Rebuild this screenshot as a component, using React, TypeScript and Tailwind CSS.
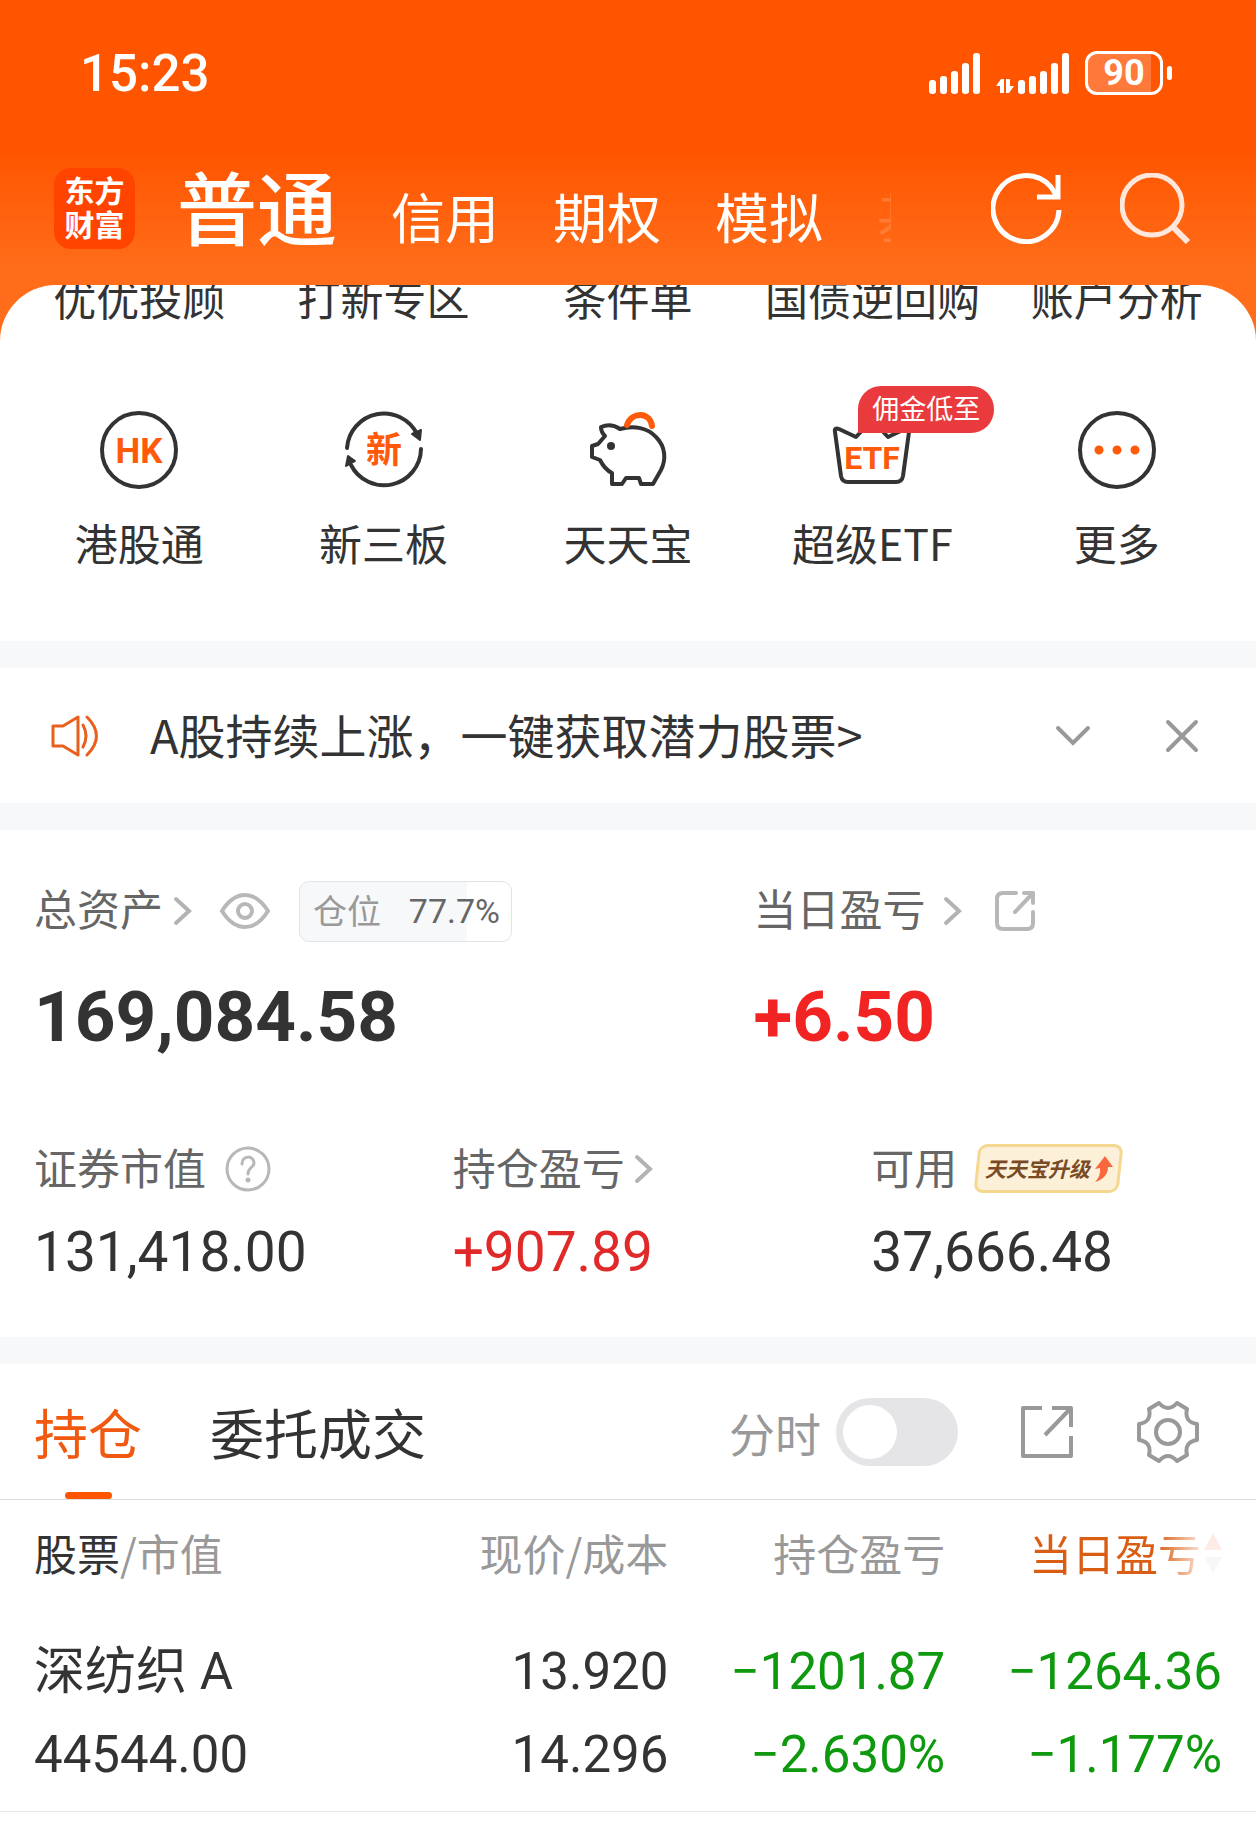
import type { ReactNode } from "react";

const shortcutLabels = ["优优投顾", "打新专区", "条件单", "国债逆回购", "账户分析"];

const holdings = [
  {
    name: "深纺织 A",
    marketValue: "44544.00",
    price: "13.920",
    cost: "14.296",
    profit: "−1201.87",
    profitRate: "−2.630%",
    dayProfit: "−1264.36",
    dayRate: "−1.177%",
  },
];

function SignalBars() {
  return (
    <svg className="h-[41px] w-[51px]" viewBox="0 0 51 41" fill="currentColor" aria-hidden="true">
      <rect x="0" y="27" width="7" height="14" rx="3" />
      <rect x="11" y="23" width="7" height="18" rx="3" />
      <rect x="22" y="18" width="7" height="23" rx="3" />
      <rect x="33" y="10" width="7" height="31" rx="3" />
      <rect x="44" y="0" width="7" height="41" rx="3" />
    </svg>
  );
}

function StatusBar() {
  return (
    <div className="flex h-[50px] items-center justify-between pr-[84px] pl-20 font-['Roboto',sans-serif]">
      <span className="pt-[2px] text-[51px] leading-[50px] font-medium">15:23</span>
      <div className="flex items-center">
        <SignalBars />
        <svg className="mt-[26px] ml-4 h-[14px] w-[18px]" viewBox="0 0 18 14" fill="currentColor" aria-hidden="true">
          <path d="M8 0v14H4V7H0L5 0zM10 0h4v7h4l-5 7h-3z" />
        </svg>
        <span className="ml-1 flex">
          <SignalBars />
        </span>
        <span className="ml-4 flex h-11 w-[78px] items-center justify-center rounded-xl border-[3px] border-white bg-[linear-gradient(to_right,#ff7a3a_88%,transparent_88%)] text-[36px] leading-none font-bold">
          90
        </span>
        <span className="ml-1 h-[14px] w-[5px] rounded-full bg-white" />
      </div>
    </div>
  );
}

function TopNav() {
  return (
    <div className="mt-[52px] flex h-[116px] items-center pr-[65px] pl-[54px]">
      <div className="flex h-[81px] w-[81px] items-center justify-center rounded-[17px] bg-[#ff4400] pb-1">
        <span className="w-[60px] text-[30px] leading-[34px] font-bold">东方财富</span>
      </div>
      <nav className="ml-[42px] flex w-[714px] items-baseline gap-[54px] overflow-hidden pt-1 text-[54px] leading-[108px] whitespace-nowrap">
        <a href="#normal" className="text-[80px] font-medium">普通</a>
        <a href="#credit">信用</a>
        <a href="#options">期权</a>
        <a href="#demo">模拟</a>
        <a href="#fund" className="opacity-15">基金</a>
      </nav>
      <div className="ml-auto flex gap-[58px]">
        <button type="button" aria-label="刷新">
          <svg className="h-[71px] w-[71px]" viewBox="0 0 71 71" fill="none" stroke="currentColor" strokeWidth="5">
            <path d="M68 37A33 33 0 1 1 60 14L67 25" />
            <path d="M67 2V24H46" />
          </svg>
        </button>
        <button type="button" aria-label="搜索" className="opacity-85">
          <svg className="h-[71px] w-[71px]" viewBox="0 0 71 71" fill="none" stroke="currentColor" strokeWidth="5">
            <circle cx="32" cy="32" r="30" />
            <path d="M53 54L68 69" strokeWidth="6" />
          </svg>
        </button>
      </div>
    </div>
  );
}

function IconFrame({ children }: { children: ReactNode }) {
  return (
    <svg
      className="h-20 w-20"
      viewBox="0 0 80 80"
      fill="none"
      stroke="#333333"
      strokeWidth="4"
      strokeLinejoin="round"
      strokeLinecap="round"
      aria-hidden="true"
    >
      {children}
    </svg>
  );
}

const services = [
  {
    label: "港股通",
    icon: (
      <IconFrame>
        <circle cx="40" cy="40" r="37" />
        <text x="40" y="53" textAnchor="middle" stroke="none" className="fill-[#ff5a0a] font-['Roboto',sans-serif] text-[35px] font-bold">HK</text>
      </IconFrame>
    ),
  },
  {
    label: "新三板",
    icon: (
      <IconFrame>
        <path d="M3 38A37 37 0 0 1 73 24M77 39A37 37 0 0 1 7 55" />
        <path d="M68 24L77 20L76 30ZM4 46L2 56L11 51Z" fill="#333333" strokeWidth="2" />
        <text x="40" y="53" textAnchor="middle" stroke="none" className="fill-[#ff5a0a] text-[36px] font-bold">新</text>
      </IconFrame>
    ),
  },
  {
    label: "天天宝",
    icon: (
      <IconFrame>
        <path d="M13 17C20 14 26 15 32 19C46 15 60 18 68 27C78 37 78 50 73 60L65 74H53L51 68H38L34 74H24V63C18 60 15 56 12 50L4 47V36L10 34L17 26C14 23 13 20 13 17Z" />
        <circle cx="23" cy="36" r="4" fill="#333333" stroke="none" />
        <path d="M39 15C44 1 62 2 64 16" stroke="#ff5a0a" strokeWidth="6" />
      </IconFrame>
    ),
  },
  {
    label: "超级ETF",
    badge: "佣金低至",
    icon: (
      <IconFrame>
        <path d="M7 19L24 27L40 10L56 27L73 19Q78 17 77 22L71 66Q70 72 64 72H16Q10 72 9 66L3 22Q2 17 7 19Z" />
        <text x="40" y="59" textAnchor="middle" stroke="none" className="fill-[#ff5a0a] font-['Roboto',sans-serif] text-[32px] font-bold">ETF</text>
      </IconFrame>
    ),
  },
  {
    label: "更多",
    icon: (
      <IconFrame>
        <circle cx="40" cy="40" r="37" />
        <path d="M22 40h0M40 40h0M58 40h0" stroke="#ff5a0a" strokeWidth="9" />
      </IconFrame>
    ),
  },
];

function Shortcuts() {
  return (
    <section className="overflow-hidden rounded-t-[56px] bg-white px-[17px] pb-[69px] text-[43px] leading-[60px] whitespace-nowrap">
      <div className="-mt-[18px] grid grid-cols-5 text-center">
        {shortcutLabels.map((label) => (
          <a key={label} href="#shortcut">{label}</a>
        ))}
      </div>
      <div className="mt-[83px] grid grid-cols-5">
        {services.map((item) => (
          <a key={item.label} href="#service" className="relative flex flex-col items-center gap-[22px]">
            {item.icon}
            <span>{item.label}</span>
            {item.badge && (
              <span className="absolute -top-6 left-[108px] flex h-[47px] w-[136px] items-center justify-center rounded-[23px] rounded-bl-none bg-[#e93b3d] pb-1 text-[27px] leading-none text-white">
                {item.badge}
              </span>
            )}
          </a>
        ))}
      </div>
    </section>
  );
}

function Notice() {
  return (
    <section className="flex h-[135px] items-center pr-14 pl-[51px]">
      <svg className="h-[42px] w-12" viewBox="0 0 48 42" fill="none" stroke="#e8611c" strokeWidth="3" strokeLinejoin="round" aria-hidden="true">
        <path d="M2 11H12L27 2V40L12 31H2Z" />
        <path d="M32 10Q38 21 32 32M36 2Q55 21 36 40" strokeLinecap="round" />
      </svg>
      <a href="#notice" className="ml-[51px] pb-1 text-[47px] leading-[60px] whitespace-nowrap">A股持续上涨，一键获取潜力股票&gt;</a>
      <div className="ml-auto flex items-center gap-[73px] text-[#999999]">
        <button type="button" aria-label="展开">
          <svg className="h-9 w-9" viewBox="0 0 36 36" fill="none" stroke="currentColor" strokeWidth="4" strokeLinecap="round">
            <path d="M3 10L18 25L33 10" />
          </svg>
        </button>
        <button type="button" aria-label="关闭">
          <svg className="h-9 w-9" viewBox="0 0 36 36" fill="none" stroke="currentColor" strokeWidth="4" strokeLinecap="round">
            <path d="M4 4L32 32M32 4L4 32" />
          </svg>
        </button>
      </div>
    </section>
  );
}

function Chevron() {
  return (
    <svg className="h-[30px] w-5" viewBox="0 0 20 30" fill="none" stroke="#b3b3b3" strokeWidth="4" strokeLinecap="round" aria-hidden="true">
      <path d="M3 3L16 15L3 27" />
    </svg>
  );
}

function Assets() {
  return (
    <section className="pt-[46px] pb-[54px] text-[43px] leading-[61px] whitespace-nowrap text-[#666666]">
      <div className="grid grid-cols-[3fr_2fr]">
        <div className="pl-[34px]">
          <div className="flex h-[70px] items-center">
            <span className="pb-2">总资产</span>
            <span className="ml-[10px] flex"><Chevron /></span>
            <button type="button" aria-label="隐藏金额" className="ml-[26px]">
              <svg className="h-9 w-[52px]" viewBox="0 0 52 36" fill="none" stroke="#b8b8b8" strokeWidth="4">
                <path d="M3 18Q13 2 26 2T49 18Q39 34 26 34T3 18Z" />
                <circle cx="26" cy="18" r="7" />
              </svg>
            </button>
            <div className="ml-7 flex h-[61px] w-[213px] items-center justify-between rounded-[10px] border border-[#e2e3e5] bg-[linear-gradient(to_right,#f7f8fa_79%,transparent_79%)] pr-[11px] pl-[13px] text-[34px]">
              <span className="pb-1 text-[#999999]">仓位</span>
              <span className="font-['Roboto',sans-serif]">77.7%</span>
            </div>
          </div>
          <p className="mt-[26px] font-['Roboto',sans-serif] text-[71px] leading-[90px] font-bold text-[#333333]">169,084.58</p>
        </div>
        <div>
          <div className="flex h-[70px] items-center">
            <span className="pb-2">当日盈亏</span>
            <span className="ml-[17px] flex"><Chevron /></span>
            <button type="button" aria-label="分享当日盈亏" className="ml-8">
              <svg className="h-10 w-10" viewBox="0 0 40 40" fill="none" stroke="#b8b8b8" strokeWidth="4" strokeLinecap="round" strokeLinejoin="round">
                <path d="M21 2H8Q2 2 2 8V32Q2 38 8 38H32Q38 38 38 32V21M29 2H38V12M38 2L20 21" />
              </svg>
            </button>
          </div>
          <p className="mt-[26px] font-['Roboto',sans-serif] text-[71px] leading-[90px] font-bold text-[#f12323]">+6.50</p>
        </div>
      </div>

      <div className="mt-[76px] grid grid-cols-3">
        <div className="pl-[34px]">
          <div className="flex h-[61px] items-center">
            <span className="pb-1">证券市值</span>
            <button type="button" aria-label="说明" className="ml-[19px]">
              <svg className="h-[46px] w-[46px]" viewBox="0 0 46 46" fill="none" stroke="#b8b8b8" strokeWidth="3" strokeLinecap="round">
                <circle cx="23" cy="23" r="21" />
                <path d="M17 18C17 9 29 9 29 17C29 22 23 21 23 28" />
                <path d="M23 34h0" strokeWidth="5" />
              </svg>
            </button>
          </div>
          <p className="mt-[23px] font-['Roboto',sans-serif] text-[55px] text-[#333333]">131,418.00</p>
        </div>
        <div className="pl-[34px]">
          <div className="flex h-[61px] items-center">
            <span className="pb-1">持仓盈亏</span>
            <span className="ml-[9px] flex"><Chevron /></span>
          </div>
          <p className="mt-[23px] font-['Roboto',sans-serif] text-[55px] text-[#e02a2a]">+907.89</p>
        </div>
        <div className="pl-[34px]">
          <div className="flex h-[61px] items-center">
            <span className="pb-1">可用</span>
            <a href="#upgrade" className="relative ml-[17px] flex h-[49px] w-[149px] items-center justify-center gap-1 text-[21px] leading-none font-bold text-[#7a4a24] italic">
              <span className="absolute inset-0 mx-[2px] -skew-x-6 rounded-[9px] border-[3px] border-[#f5d78f] bg-[#fdf0d8]" />
              <span className="relative">天天宝升级</span>
              <svg className="relative h-[26px] w-[19px]" viewBox="0 0 19 26" fill="#f9673c" aria-hidden="true">
                <path d="M11 0L19 11L14 11Q14 22 1 26Q7 20 6 12L1 13Z" />
              </svg>
            </a>
          </div>
          <p className="mt-[23px] font-['Roboto',sans-serif] text-[55px] text-[#333333]">37,666.48</p>
        </div>
      </div>
    </section>
  );
}

function HoldingsTabs() {
  return (
    <div className="flex h-[136px] items-center border-b border-[#dddddd] pr-[57px] pl-[34px] text-[54px] leading-[134px] whitespace-nowrap">
      <button type="button" className="relative text-[#f0590f]">
        持仓
        <span className="absolute bottom-0 left-[31px] h-[7px] w-[47px] rounded-full bg-[#ff5500]" />
      </button>
      <button type="button" className="ml-[68px]">委托成交</button>
      <label htmlFor="timeline" className="ml-auto text-[46px] text-[#999999]">分时</label>
      <input
        id="timeline"
        type="checkbox"
        className="ml-[15px] flex h-[68px] w-[122px] shrink-0 appearance-none items-center rounded-full bg-[#e5e5e7] pl-[7px] before:h-[54px] before:w-[54px] before:rounded-full before:bg-white"
      />
      <button type="button" aria-label="分享持仓" className="ml-[62px]">
        <svg className="h-[54px] w-[54px]" viewBox="0 0 54 54" fill="none" stroke="#999999" strokeWidth="4" strokeLinejoin="round">
          <path d="M22 3H3V51H51V31M32 3H51V22M51 3L25 30" />
        </svg>
      </button>
      <button type="button" aria-label="设置" className="ml-[63px]">
        <svg className="h-[62px] w-[62px]" viewBox="0 0 62 62" fill="none" stroke="#999999" strokeWidth="4" strokeLinejoin="round">
          <path d="M22 2Q31 12 40 2L50 8Q47 21 60 23V39Q47 41 50 54L40 60Q31 50 22 60L12 54Q15 41 2 39V23Q15 21 12 8Z" />
          <circle cx="31" cy="31" r="12" />
        </svg>
      </button>
    </div>
  );
}

function HoldingsTable() {
  return (
    <div className="border-b border-[#e8e8e8] pr-[34px] pl-[34px]">
      <table className="w-full table-fixed text-right whitespace-nowrap">
        <thead className="text-[43px] leading-[105px] text-[#999999]">
          <tr>
            <th className="w-[30%] text-left font-normal">
              <span className="text-[#333333]">股票</span>/市值
            </th>
            <th className="w-[23.4%] font-normal">现价/成本</th>
            <th className="w-[23.3%] font-normal">持仓盈亏</th>
            <th className="w-[23.3%] font-normal">
              <span className="flex items-center justify-end">
                <span className="bg-[linear-gradient(to_right,#d95d12_74%,#fbe3d8_100%)] bg-clip-text text-transparent">当日盈亏</span>
                <svg className="ml-[3px] h-10 w-[18px]" viewBox="0 0 18 40" aria-hidden="true">
                  <path d="M9 0L18 17H0Z" fill="#fdece5" />
                  <path d="M9 40L18 24H0Z" fill="#f6f7f9" />
                </svg>
              </span>
            </th>
          </tr>
        </thead>
        <tbody className="text-[51px] leading-[83px]">
          {holdings.map((row) => (
            <tr key={row.name} className="font-['Roboto','Noto_Sans_CJK_SC',sans-serif]">
              <td className="pt-[25px] pb-[15px] text-left">
                <p>{row.name}</p>
                <p>{row.marketValue}</p>
              </td>
              <td className="pt-[25px] pb-[15px]">
                <p>{row.price}</p>
                <p>{row.cost}</p>
              </td>
              <td className="pt-[25px] pb-[15px] text-[#0f990f]">
                <p>{row.profit}</p>
                <p>{row.profitRate}</p>
              </td>
              <td className="pt-[25px] pb-[15px] text-[#0f990f]">
                <p>{row.dayProfit}</p>
                <p>{row.dayRate}</p>
              </td>
            </tr>
          ))}
        </tbody>
      </table>
    </div>
  );
}

export default function App() {
  return (
    <main className="min-h-screen overflow-x-hidden bg-white font-['Noto_Sans_CJK_SC',sans-serif] text-[#333333]">
      <div className="bg-[linear-gradient(to_bottom,#ff5500_150px,#ff6d1a_270px)]">
        <header className="pt-12 pb-[19px] text-white">
          <StatusBar />
          <TopNav />
        </header>
        <Shortcuts />
      </div>
      <div className="h-[27px] bg-[#f7f8fa]" />
      <Notice />
      <div className="h-[27px] bg-[#f7f8fa]" />
      <Assets />
      <div className="h-[27px] bg-[#f7f8fa]" />
      <HoldingsTabs />
      <HoldingsTable />
    </main>
  );
}
